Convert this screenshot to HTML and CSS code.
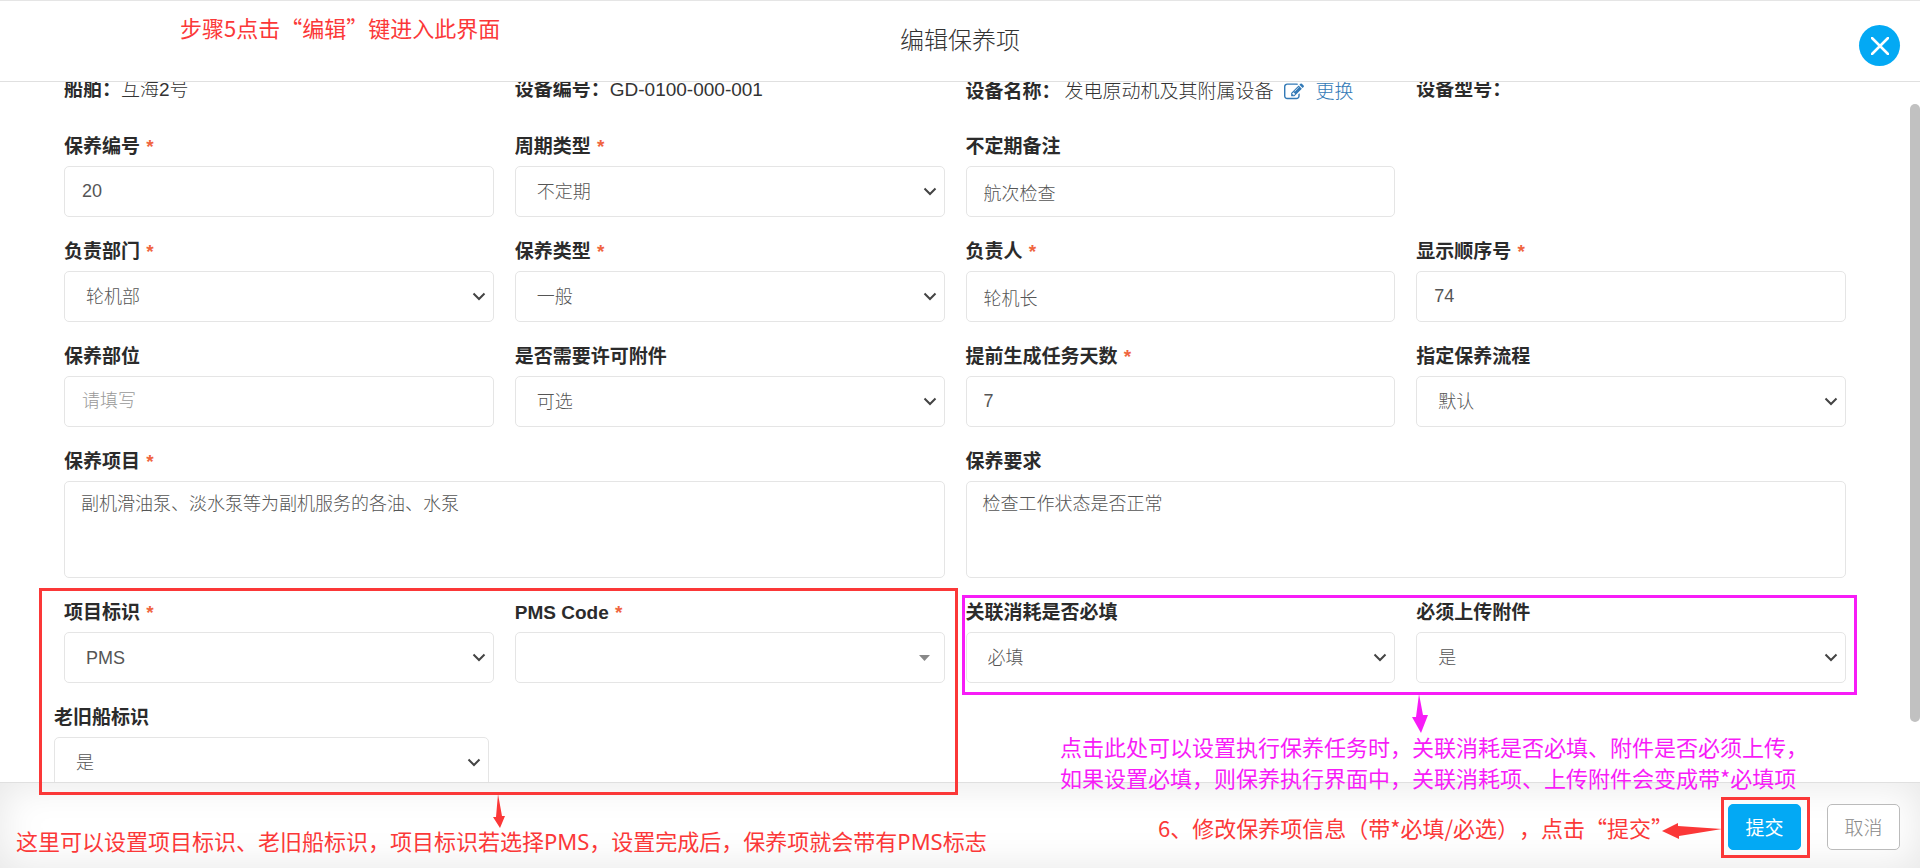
FILE: index.html
```html
<!DOCTYPE html>
<html lang="zh-CN">
<head>
<meta charset="utf-8">
<title>编辑保养项</title>
<link rel="stylesheet" href="styles.css">
</head>
<body>
<form class="dialog">
  <header class="dialog-header">
    <h1 class="dialog-title">编辑保养项</h1>
    <button class="close" type="button" aria-label="关闭">
      <svg viewBox="0 0 18 18" width="18" height="18"><path d="M1 1L17 17M17 1L1 17" stroke="#fff" stroke-width="2.500" stroke-linecap="round"/></svg>
    </button>
  </header>

  <main class="dialog-body">
    <div class="info grid">
      <div class="info-item"><b>船舶：</b><span>互海2号</span></div>
      <div class="info-item"><b>设备编号：</b><span>GD-0100-000-001</span></div>
      <div class="info-item info-name"><b>设备名称：</b><span>发电原动机及其附属设备</span>
        <a class="change" href="#"><svg viewBox="0 0 1792 1792" width="20" height="20" fill="currentColor"><path d="M888 1184l116-116-152-152-116 116v56h96v96h56zm440-720q-16-16-33 1l-350 350q-17 17-1 33t33-1l350-350q17-17 1-33zm80 594v190q0 119-84.500 203.500t-203.500 84.500h-832q-119 0-203.500-84.500t-84.500-203.500v-832q0-119 84.500-203.500t203.500-84.500h832q63 0 117 25 15 7 18 23 3 17-9 29l-49 49q-14 14-32 8-23-6-45-6h-832q-66 0-113 47t-47 113v832q0 66 47 113t113 47h832q66 0 113-47t47-113v-126q0-13 9-22l64-64q15-15 35-7t20 29zm-96-738l288 288-672 672h-288v-288zm444 132l-92 92-288-288 92-92q28-28 68-28t68 28l152 152q28 28 28 68t-28 68z"/></svg>更换</a>
      </div>
      <div class="info-item"><b>设备型号：</b></div>
    </div>

    <div class="grid">
      <div class="field"><label for="code">保养编号 <i>*</i></label><input id="code" type="text" value="20"></div>
      <div class="field"><label for="cycle">周期类型 <i>*</i></label><select id="cycle"><option>不定期</option></select></div>
      <div class="field row-end"><label for="remark">不定期备注</label><input id="remark" type="text" value="航次检查"></div>

      <div class="field"><label for="dept">负责部门 <i>*</i></label><select id="dept"><option>轮机部</option></select></div>
      <div class="field"><label for="type">保养类型 <i>*</i></label><select id="type"><option>一般</option></select></div>
      <div class="field"><label for="owner">负责人 <i>*</i></label><input id="owner" type="text" value="轮机长"></div>
      <div class="field"><label for="order">显示顺序号 <i>*</i></label><input id="order" type="text" value="74"></div>

      <div class="field"><label for="part">保养部位</label><input id="part" type="text" placeholder="请填写"></div>
      <div class="field"><label for="permit">是否需要许可附件</label><select id="permit"><option>可选</option></select></div>
      <div class="field"><label for="days">提前生成任务天数 <i>*</i></label><input id="days" type="text" value="7"></div>
      <div class="field"><label for="flow">指定保养流程</label><select id="flow"><option>默认</option></select></div>

      <div class="field wide"><label for="item">保养项目 <i>*</i></label><textarea id="item">副机滑油泵、淡水泵等为副机服务的各油、水泵</textarea></div>
      <div class="field wide"><label for="demand">保养要求</label><textarea id="demand">检查工作状态是否正常</textarea></div>

      <div class="field"><label for="mark">项目标识 <i>*</i></label><select id="mark"><option>PMS</option></select></div>
      <div class="field"><label for="pms">PMS Code <i>*</i></label><select id="pms" class="caret"><option></option></select></div>
      <div class="field"><label for="consume">关联消耗是否必填</label><select id="consume"><option>必填</option></select></div>
      <div class="field"><label for="upload">必须上传附件</label><select id="upload"><option>是</option></select></div>
    </div>

    <div class="grid outdent">
      <div class="field"><label for="old">老旧船标识</label><select id="old"><option>是</option></select></div>
    </div>
    <div class="scrollbar"></div>
  </main>

  <footer class="dialog-footer">
    <button class="btn primary" type="submit">提交</button>
    <button class="btn" type="button">取消</button>
  </footer>
</form>

<div class="notes">
  <div class="frame frame-mark"></div>
  <div class="frame frame-required"></div>
  <div class="frame frame-submit"></div>
  <svg class="arrows" width="1920" height="868" viewBox="0 0 1920 868">
    <path class="red" d="M498 794L502 816L505 816L500 828L493 817L496 817Z"/>
    <path class="pink" d="M1419 694L1423 715L1428 715L1421 733L1412 717L1416 717Z"/>
    <path class="red" d="M1722 829L1678 826L1678 823L1662 831L1679 839L1679 836Z"/>
  </svg>
  <p class="note note-step">步骤5点击“编辑”键进入此界面</p>
  <p class="note note-mark">这里可以设置项目标识、老旧船标识，项目标识若选择PMS，设置完成后，保养项就会带有PMS标志</p>
  <p class="note note-required">点击此处可以设置执行保养任务时，关联消耗是否必填、附件是否必须上传，<br>如果设置必填，则保养执行界面中，关联消耗项、上传附件会变成带*必填项</p>
  <p class="note note-submit">6、修改保养项信息（带*必填/必选），点击“提交”</p>
</div>
</body>
</html>
```

FILE: styles.css
```css
* { box-sizing: border-box; }

body {
  margin: 0;
  font-family: "Liberation Sans", "Noto Sans CJK SC", sans-serif;
  font-size: 19px;
  color: #333;
  background: #fff;
}

.dialog {
  display: flex;
  flex-direction: column;
  height: 100vh;
  overflow: hidden;
}

.dialog-header {
  position: relative;
  flex: none;
  display: flex;
  align-items: center;
  justify-content: center;
  height: 82px;
  border-top: 1px solid #e5e5e5;
  border-bottom: 1px solid #e0e0e0;
}

.dialog-title {
  margin: 0;
  font-size: 24px;
  font-weight: 300;
  line-height: 36px;
}

.close {
  position: absolute;
  top: 24px;
  right: 20px;
  display: flex;
  align-items: center;
  justify-content: center;
  width: 41px;
  height: 41px;
  padding: 0;
  border: 0;
  border-radius: 50%;
  background: #03a9f4;
}

.dialog-body {
  position: relative;
  flex: 1;
  min-height: 0;
  padding: 0 74px 0 64px;
  overflow: hidden;
}

.grid {
  display: grid;
  grid-template-columns: repeat(4, minmax(0, 1fr));
  gap: 20px 21px;
}

.info {
  margin-top: -6px;
  margin-bottom: 28px;
}

.info-item {
  display: flex;
  height: 28px;
  line-height: 28px;
  font-weight: 300;
  white-space: nowrap;
}

.info-item b { font-weight: 700; color: #2b2b2b; }

.info-name { padding-top: 2px; }
.info-name span { margin-left: 4px; }

.change {
  display: flex;
  align-items: center;
  gap: 12px;
  margin-left: 10px;
  height: 28px;
  color: #337ab7;
  text-decoration: none;
}

.outdent { margin: 20px -10px 0; }

.row-end + .field { grid-column: 1; }
.wide { grid-column: span 2; }

.field {
  display: flex;
  flex-direction: column;
  gap: 4px;
}

label {
  height: 30px;
  line-height: 30px;
  font-weight: 700;
  color: #2b2b2b;
}

label i {
  margin-left: 1px;
  font-style: normal;
  color: #f0653f;
}

input, select, textarea {
  width: 100%;
  height: 51px;
  padding: 0 17px;
  border: 1px solid #e5e5e5;
  border-radius: 5px;
  background: #fff;
  color: #555;
  font-family: inherit;
  font-size: 18px;
  font-weight: 300;
}

input::placeholder { color: #999; }

textarea {
  display: block;
  height: 97px;
  padding: 9px 16px;
  line-height: 26px;
  resize: none;
}

select {
  appearance: none;
  padding: 0 36px 0 21px;
  background: #fff url("data:image/svg+xml,%3Csvg xmlns='http://www.w3.org/2000/svg' width='14' height='9'%3E%3Cpath d='M1.500 1.500L7 7L12.500 1.500' fill='none' stroke='%23444' stroke-width='2'/%3E%3C/svg%3E") no-repeat right 7px center;
}

select.caret {
  background: #fff url("data:image/svg+xml,%3Csvg xmlns='http://www.w3.org/2000/svg' width='11' height='6'%3E%3Cpath d='M0 0H11L5.500 6Z' fill='%23888'/%3E%3C/svg%3E") no-repeat right 14px center;
}

.scrollbar {
  position: absolute;
  top: 22px;
  right: 0;
  bottom: 60px;
  width: 10px;
  border-radius: 5px;
  background: #c1c1c1;
}

.dialog-footer {
  flex: none;
  display: flex;
  justify-content: flex-end;
  align-items: flex-start;
  gap: 26px;
  height: 86px;
  padding: 21px 20px 0;
  border-top: 1px solid #e0e0e0;
  box-shadow: inset 0 0 40px rgba(0, 0, 0, 0.1);
}

.btn {
  width: 73px;
  height: 46px;
  padding: 0 0 2px;
  border: 1px solid #bbb;
  border-radius: 5px;
  background: #fff;
  color: #888;
  font-family: inherit;
  font-size: 19px;
  font-weight: 300;
}

.btn.primary {
  border-color: #03a9f4;
  background: #03a9f4;
  color: #fff;
  font-weight: 400;
}

.notes {
  position: absolute;
  inset: 0;
  overflow: hidden;
  pointer-events: none;
}

.arrows { position: absolute; top: 0; left: 0; }
.red { fill: #fb3838; }
.pink { fill: #f71cf7; }

.frame { position: absolute; border: 3px solid #fb3838; }
.frame-mark { left: 39px; top: 588px; width: 919px; height: 207px; }
.frame-required { left: 962px; top: 595px; width: 895px; height: 100px; border-color: #f71cf7; }
.frame-submit { left: 1721px; top: 797px; width: 89px; height: 61px; }

.note {
  position: absolute;
  margin: 0;
  color: #fb3838;
  font-family: "Noto Sans CJK SC", sans-serif;
  font-size: 22px;
  line-height: 31px;
  text-spacing-trim: space-all;
  white-space: nowrap;
}
.note-step { left: 180px; top: 12px; }
.note-mark { left: 16px; top: 826px; font-family: "Noto Sans", "Noto Sans CJK SC", sans-serif; }
.note-required { left: 1060px; top: 731px; color: #f71cf7; }
.note-submit { left: 1158px; top: 812px; }
```
